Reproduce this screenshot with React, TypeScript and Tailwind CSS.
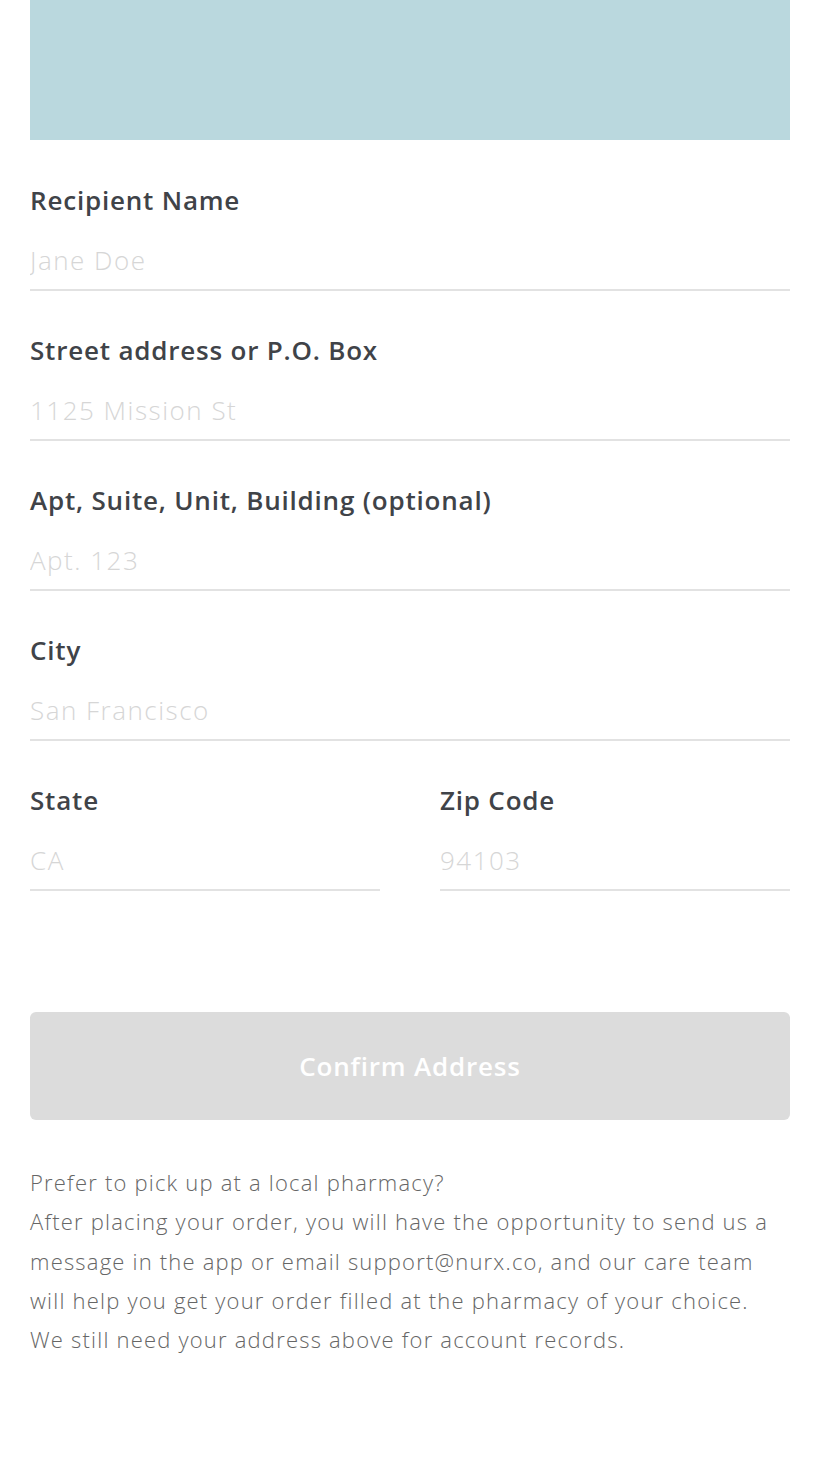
import React from 'react';

const fields = [
  { label: 'Recipient Name', placeholder: 'Jane Doe' },
  { label: 'Street address or P.O. Box', placeholder: '1125 Mission St' },
  { label: 'Apt, Suite, Unit, Building (optional)', placeholder: 'Apt. 123' },
  { label: 'City', placeholder: 'San Francisco' },
];

function Field({ label, placeholder }: { label: string; placeholder: string }) {
  return (
    <div className="flex flex-col">
      <div className="text-[26px] leading-[30px] font-semibold tracking-[0.8px] text-[#404348]">{label}</div>
      <input
        className="mt-[30px] pb-[14px] text-[26px] leading-[30px] font-light tracking-[1.5px] text-[#3f4246] placeholder:text-[#d6d6d6] border-b-2 border-[#e2e2e2] outline-none bg-transparent"
        placeholder={placeholder}
      />
    </div>
  );
}

export default function App() {
  return (
    <div className="min-h-[1458px] bg-white px-[30px] font-['Open_Sans',sans-serif]">
      <div className="h-[140px] bg-[#bad8de]" />

      <div className="mt-[45px] flex flex-col gap-[44px]">
        {fields.map((f) => (
          <Field key={f.label} {...f} />
        ))}
        <div className="grid grid-cols-2 gap-[60px]">
          <Field label="State" placeholder="CA" />
          <Field label="Zip Code" placeholder="94103" />
        </div>
      </div>

      <button
        disabled
        className="mt-[121px] w-full h-[108px] rounded-[6px] bg-[#dcdcdc] text-white text-[26px] font-semibold tracking-[0.8px]"
      >
        Confirm Address
      </button>

      <div className="mt-[43px] text-[22px] leading-[39.3px] tracking-[1.2px] text-[#666] font-light">
        <p>Prefer to pick up at a local pharmacy?</p>
        <p>
          After placing your order, you will have the opportunity to send us a message in the app or email
          support@nurx.co, and our care team will help you get your order filled at the pharmacy of your choice.
        </p>
        <p>We still need your address above for account records.</p>
      </div>
    </div>
  );
}
